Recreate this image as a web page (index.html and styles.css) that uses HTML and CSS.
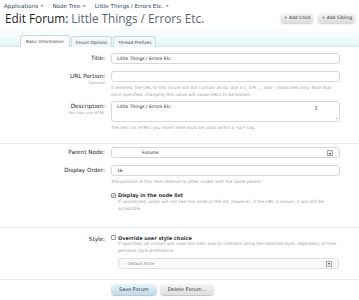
FILE: index.html
```html
<!DOCTYPE html>
<html>
<head>
<meta charset="utf-8">
<link rel="stylesheet" href="styles.css">
</head>
<body>
<div class="crumbs">
  <span>Applications</span><span class="sep">▸</span>
  <span>Node Tree</span><span class="sep">▸</span>
  <span>Little Things / Errors Etc.</span><span class="sep">▸</span>
</div>
<div class="header">
  <h1><span class="h-strong">Edit Forum:</span> Little Things / Errors Etc.</h1>
  <div class="top-buttons">
    <span class="btn-small">+ Add Child</span>
    <span class="btn-small">+ Add Sibling</span>
  </div>
</div>
<div class="tabbar">
  <span class="tab active">Basic Information</span>
  <span class="tab">Forum Options</span>
  <span class="tab">Thread Prefixes</span>
</div>
<div class="form">
  <div class="row r-title">
    <div class="label"><b>Title:</b></div>
    <div class="ctrl"><div class="input">Little Things / Errors Etc.</div></div>
  </div>
  <div class="row r-url">
    <div class="label"><b>URL Portion:</b><i>Optional</i></div>
    <div class="ctrl">
      <div class="input"></div>
      <div class="help">If entered, the URL to this forum will not contain an ID. Use a-z, 0-9, _, and - characters only. Note that once specified, changing this value will cause URLs to be broken.</div>
    </div>
  </div>
  <div class="row r-desc">
    <div class="label"><b>Description:</b><i>You may use HTML</i></div>
    <div class="ctrl">
      <div class="input textarea">Little Things / Errors Etc.<span class="cursor">I</span><span class="grip"></span></div>
      <div class="help">The text (or HTML) you insert here must be valid within a &lt;p&gt; tag.</div>
    </div>
  </div>
  <div class="sepline s1"></div>
  <div class="row r-parent">
    <div class="label"><b>Parent Node:</b></div>
    <div class="ctrl"><div class="input select"><span class="sel-text">Forums</span><span class="arrow"></span></div></div>
  </div>
  <div class="row r-order">
    <div class="label"><b>Display Order:</b></div>
    <div class="ctrl">
      <div class="input">16</div>
      <div class="help">The position of this item relative to other nodes with the same parent.</div>
    </div>
  </div>
  <div class="row r-check">
    <div class="label"></div>
    <div class="ctrl">
      <div class="check"><span class="box checked">✓</span><b>Display in the node list</b></div>
      <div class="help ind">If unselected, users will not see this node in the list. However, if the URL is known, it will still be accessible.</div>
    </div>
  </div>
  <div class="sepline s2"></div>
  <div class="row r-style">
    <div class="label"><b>Style:</b></div>
    <div class="ctrl">
      <div class="check"><span class="box"></span><b>Override user style choice</b></div>
      <div class="help ind">If specified, all visitors will view this item and its contents using the selected style, regardless of their personal style preference.</div>
      <div class="input select disabled"><span class="def">-- Default Style</span><span class="arrow"></span></div>
    </div>
  </div>
  <div class="sepline s3"></div>
  <div class="row r-buttons">
    <div class="label"></div>
    <div class="ctrl btns">
      <span class="btn primary">Save Forum</span>
      <span class="btn">Delete Forum...</span>
    </div>
  </div>
</div>
</body>
</html>
```

FILE: styles.css
```css
* { box-sizing: border-box; }
html, body { margin: 0; padding: 0; background: #fff; }
body {
  width: 359px;
  height: 300px;
  overflow: hidden;
  font-family: "DejaVu Sans", sans-serif;
  color: #333;
}
.crumbs {
  font-size: 5.6px;
  color: #2b485c;
  padding: 2px 0 0 4px;
  height: 9px;
  display: flex;
  gap: 3px;
  align-items: center;
}
.crumbs .sep { color: #6a8090; font-size: 4.5px; margin-right: 6px; }
.header {
  display: flex;
  justify-content: space-between;
  align-items: flex-start;
  height: 18px;
}
h1 {
  margin: 2px 0 0 5px;
  font-family: "Open Sans", sans-serif;
  font-weight: normal;
  font-size: 11.8px;
  line-height: 14px;
  color: #5c6670;
}
.h-strong { color: #222; }
.top-buttons { display: flex; gap: 5px; margin: 4px 4px 0 0; }
.btn-small {
  font-size: 4.5px;
  color: #333;
  padding: 0 3px;
  height: 10px;
  line-height: 10px;
  border-radius: 3px;
  background: linear-gradient(#f6f6f6, #dcdcdc);
  box-shadow: 0 1px 2px rgba(0,0,0,0.2);
}
.tabbar {
  height: 20px;
  background: linear-gradient(#ffffff 0%, #f3fbfb 55%, #e2f4f4 100%);
  border-bottom: 1px solid #d6e6ea;
  display: flex;
  align-items: flex-end;
  padding-left: 20px;
}
.tab {
  font-size: 4.3px;
  color: #444;
  height: 11px;
  line-height: 11px;
  padding: 0 4px;
  background: #f0f7f9;
  border: 1px solid #cbdde4;
  border-bottom: none;
  border-radius: 3px 3px 0 0;
  margin-right: 1px;
  margin-bottom: -1px;
}
.tab.active { background: #fff; height: 12px; padding: 0 5px; }
.form { padding-top: 6px; }
.row {
  display: grid;
  grid-template-columns: 105px 1fr;
  column-gap: 6px;
  padding-right: 19px;
}
.label {
  text-align: right;
  font-size: 5.7px;
  color: #333;
  padding-top: 2px;
  display: flex;
  flex-direction: column;
  align-items: flex-end;
}
.label b { font-weight: normal; color: #222; }
.label i { font-style: normal; font-size: 3.9px; color: #aaa; margin-top: 1px; }
.input {
  height: 11px;
  border: 1px solid #d8d8d8;
  border-radius: 3px;
  background: #fff;
  font-size: 4.5px;
  line-height: 9px;
  padding-left: 5px;
  color: #222;
  position: relative;
}
.textarea { height: 21px; }
.cursor {
  position: absolute;
  left: 203px;
  top: 2px;
  font-size: 7px;
  color: #555;
  font-family: "Liberation Serif", serif;
}
.grip {
  position: absolute;
  right: 1px;
  bottom: 1px;
  width: 3px;
  height: 3px;
  background: linear-gradient(135deg, transparent 50%, #aaa 50%, transparent 70%);
}
.help {
  font-size: 4.3px;
  color: #a0a0a0;
  line-height: 6.7px;
  margin-top: 3px;
}
.r-url { margin-top: 7px; }
.r-desc { margin-top: 3px; }
.sepline {
  height: 1px;
  background: #e8eff2;
}
.s1 { margin: 11px 0 3px 0; }
.select { text-align: left; }
.select .sel-text { display: block; padding-left: 25px; }
.arrow {
  position: absolute;
  right: 6px;
  top: 2px;
  width: 6px;
  height: 6px;
  border: 1px solid #aaa;
  background: #eee;
}
.arrow::after {
  content: "";
  position: absolute;
  left: 1px;
  top: 1.5px;
  border-left: 1.5px solid transparent;
  border-right: 1.5px solid transparent;
  border-top: 2px solid #333;
}
.r-order { margin-top: 7px; }
.r-check { margin-top: 6px; }
.check {
  font-size: 5px;
  display: flex;
  align-items: center;
  gap: 2px;
  color: #333;
  height: 7px;
}
.box {
  width: 5px;
  height: 5px;
  border: 1px solid #999;
  background: #f4f4f4;
  font-size: 4px;
  line-height: 3px;
  text-align: center;
  color: #333;
  border-radius: 1px;
}
.help.ind { margin-left: 7px; margin-top: 0; }
.r-style .help.ind { margin-right: -3px; }
.s2 { margin: 15px 0 6px 0; }
.r-style .input { margin-left: 7px; margin-top: 3px; margin-right: 1px; }
.disabled { background: #fafafa; border-color: #e0e0e0; text-align: left; }
.def { font-style: italic; color: #888; font-size: 4px; }
.s3 { margin: 10px 0 4px 0; }
.btns { display: flex; gap: 3px; }
.label:empty { padding: 0; }
.btn {
  font-size: 5px;
  height: 11px;
  line-height: 11px;
  padding: 0 8px;
  border-radius: 4px;
  background: linear-gradient(#f6f6f6, #dedede);
  box-shadow: 0 1px 1px rgba(0,0,0,0.25);
  color: #333;
}
.btn.primary { background: linear-gradient(#e9f5fb, #bfdbea); }
.r-buttons .label { display: block; }
```
